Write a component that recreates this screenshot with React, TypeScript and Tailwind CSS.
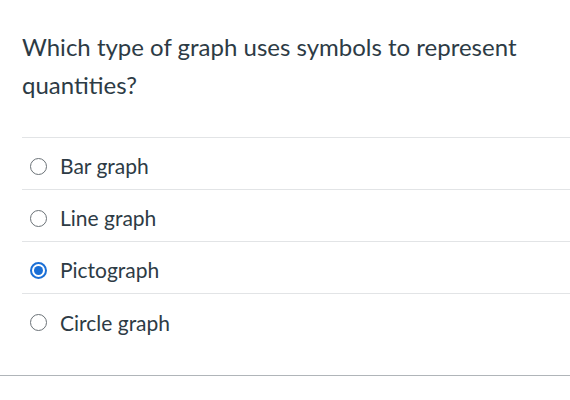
const options = ["Bar graph", "Line graph", "Pictograph", "Circle graph"];

function Radio({ checked }: { checked: boolean }) {
  if (checked) {
    return (
      <span className="flex h-[17px] w-[17px] items-center justify-center rounded-full border-2 border-[#1a6fd6] bg-white">
        <span className="h-[9px] w-[9px] rounded-full bg-[#1a6fd6]" />
      </span>
    );
  }
  return <span className="h-[17px] w-[17px] rounded-full border border-[#6b7277] bg-white" />;
}

export default function App() {
  const selected = "Pictograph";

  return (
    <div className="h-[400px] w-[570px] bg-white font-['Lato','Liberation_Sans',sans-serif] text-[#2d3b45]">
      <div className="pl-[22px] pt-[28px]">
        <p className="pr-[30px] text-[24px] leading-[38px]">
          Which type of graph uses symbols to represent quantities?
        </p>
        <div className="mt-[33px] border-t border-[#e2e4e6]">
          {options.map((opt, i) => (
            <div
              key={opt}
              className={
                "flex h-[52px] items-center gap-[13px] pl-[8px] pt-[5px] " +
                (i < options.length - 1 ? "border-b border-[#e2e4e6]" : "")
              }
            >
              <Radio checked={opt === selected} />
              <span className="text-[21px]">{opt}</span>
            </div>
          ))}
        </div>
      </div>
      <div className="mt-[29px] border-t border-[#b0b5b9]" />
    </div>
  );
}
